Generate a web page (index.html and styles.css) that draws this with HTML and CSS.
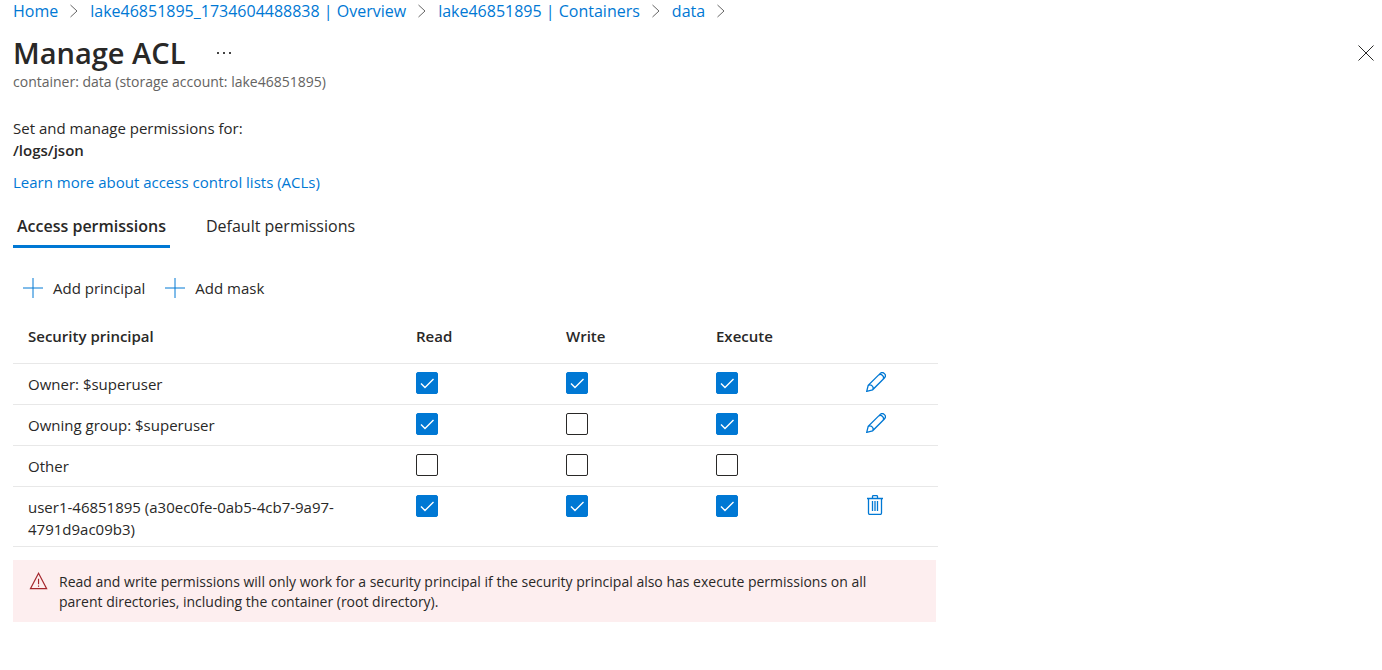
FILE: index.html
```html
<!DOCTYPE html>
<html lang="en">
<head>
<meta charset="utf-8">
<meta name="viewport" content="width=device-width, initial-scale=1">
<title>Manage ACL</title>
<link rel="stylesheet" href="styles.css">
</head>
<body>
<svg class="sprite" aria-hidden="true">
  <symbol id="chevron" viewBox="0 0 8 14"><path d="M.5 1 7 7 .5 13"/></symbol>
  <symbol id="plus" viewBox="0 0 20 20"><path d="M10 0v20M0 10h20"/></symbol>
  <symbol id="pencil" viewBox="0 0 20 20"><path d="M.7 19.3 2.2 13.4 14 1.6a3 3 0 0 1 4.4 4.4L6.6 17.8ZM2.2 13.4a3.2 3.2 0 0 1 4.4 4.4M12.6 3a3.2 3.2 0 0 1 4.4 4.4M.7 19.3 6.6 17.8"/></symbol>
  <symbol id="trash" viewBox="0 0 20 20"><path d="M1 3.500h16M6.500 3.500V1.600Q6.500 .600 7.500 .600h3Q11.500 .600 11.500 1.600V3.500M2.500 3.500V18Q2.500 19.500 4 19.500H14Q15.500 19.500 15.500 18V3.500M6.500 6v10M9 6v10M11.500 6v10"/></symbol>
  <symbol id="warning" viewBox="0 0 20 20"><path d="M9.500 1.500 18.500 18.500H.5ZM9.500 7.500v6M9.500 15v1.500"/></symbol>
  <symbol id="close" viewBox="0 0 16 16"><path d="m.5.5 15 15m0-15-15 15"/></symbol>
</svg>
<div class="page">
  <nav class="breadcrumb" aria-label="Breadcrumb">
    <a href="#">Home</a>
    <svg class="chevron"><use href="#chevron"/></svg>
    <a href="#">lake46851895_1734604488838 | Overview</a>
    <svg class="chevron"><use href="#chevron"/></svg>
    <a href="#">lake46851895 | Containers</a>
    <svg class="chevron"><use href="#chevron"/></svg>
    <a href="#">data</a>
    <svg class="chevron"><use href="#chevron"/></svg>
  </nav>

  <header class="header">
    <div class="title-row">
      <h1 class="title">Manage ACL</h1>
      <button class="more" type="button" aria-label="More actions"><svg viewBox="0 0 14 2"><path d="M0 0h2v2H0zM6 0h2v2H6zM12 0h2v2h-2z"/></svg></button>
      <button class="close" type="button" aria-label="Close"><svg><use href="#close"/></svg></button>
    </div>
    <p class="subtitle">container: data (storage account: lake46851895)</p>
  </header>

  <main class="content">
    <p class="intro">Set and manage permissions for:<br><strong>/logs/json</strong></p>
    <a class="learn" href="#">Learn more about access control lists (ACLs)</a>

    <div class="tabs" role="tablist">
      <button class="tab tab-active" type="button" role="tab" aria-selected="true">Access permissions</button>
      <button class="tab" type="button" role="tab" aria-selected="false">Default permissions</button>
    </div>

    <div class="toolbar">
      <button class="command" type="button"><svg><use href="#plus"/></svg>Add principal</button>
      <button class="command" type="button"><svg><use href="#plus"/></svg>Add mask</button>
    </div>

    <table class="acl">
      <colgroup><col class="col-name"><col class="col-perm"><col class="col-perm"><col class="col-perm"><col></colgroup>
      <thead>
        <tr><th scope="col">Security principal</th><th scope="col">Read</th><th scope="col">Write</th><th scope="col">Execute</th><td></td></tr>
      </thead>
      <tbody>
        <tr>
          <td>Owner: $superuser</td>
          <td class="tick"><input type="checkbox" aria-label="Owner read" checked></td>
          <td class="tick"><input type="checkbox" aria-label="Owner write" checked></td>
          <td class="tick"><input type="checkbox" aria-label="Owner execute" checked></td>
          <td class="action"><button type="button" aria-label="Edit owner"><svg><use href="#pencil"/></svg></button></td>
        </tr>
        <tr>
          <td>Owning group: $superuser</td>
          <td class="tick"><input type="checkbox" aria-label="Owning group read" checked></td>
          <td class="tick"><input type="checkbox" aria-label="Owning group write"></td>
          <td class="tick"><input type="checkbox" aria-label="Owning group execute" checked></td>
          <td class="action"><button type="button" aria-label="Edit owning group"><svg><use href="#pencil"/></svg></button></td>
        </tr>
        <tr>
          <td>Other</td>
          <td class="tick"><input type="checkbox" aria-label="Other read"></td>
          <td class="tick"><input type="checkbox" aria-label="Other write"></td>
          <td class="tick"><input type="checkbox" aria-label="Other execute"></td>
          <td></td>
        </tr>
        <tr>
          <td>user1-46851895 (a30ec0fe-0ab5-4cb7-9a97-4791d9ac09b3)</td>
          <td class="tick"><input type="checkbox" aria-label="user1 read" checked></td>
          <td class="tick"><input type="checkbox" aria-label="user1 write" checked></td>
          <td class="tick"><input type="checkbox" aria-label="user1 execute" checked></td>
          <td class="action"><button type="button" aria-label="Delete user1"><svg><use href="#trash"/></svg></button></td>
        </tr>
      </tbody>
    </table>

    <div class="notice" role="alert">
      <svg><use href="#warning"/></svg>
      <p>Read and write permissions will only work for a security principal if the security principal also has execute permissions on all parent directories, including the container (root directory).</p>
    </div>
  </main>
</div>
</body>
</html>
```
FILE: styles.css
```css
* { box-sizing: border-box; }

body {
  margin: 0;
  background: #fff;
  color: #292827;
  font: 15px/22px "Open Sans", "Noto Sans", sans-serif;
}

h1, p { margin: 0; }
a { color: #0078d4; text-decoration: none; }
strong { font-weight: 600; }

button {
  padding: 0;
  border: 0;
  background: none;
  color: inherit;
  font: inherit;
  cursor: pointer;
}

svg { display: block; flex: none; fill: none; stroke: currentColor; }
.sprite { display: none; }

.page { padding: 0 8px 0 13px; }

.breadcrumb {
  display: flex;
  align-items: center;
  gap: 12px;
  font-size: 16px;
}
.chevron { width: 8px; height: 14px; color: #666; }

.header { padding-top: 11px; }
.title-row { display: flex; align-items: center; height: 39px; }
.title { font-size: 29px; line-height: 39px; font-weight: 600; }
.more { margin-left: 32px; padding: 8px 0; }
.more svg { width: 14px; height: 2px; fill: #444; stroke: none; }
.close { margin-left: auto; color: #292827; }
.close svg { width: 16px; height: 16px; }
.subtitle { color: #646362; font-size: 14px; line-height: 20px; }

.content { max-width: 925px; padding-top: 25px; }
.learn { display: inline-block; margin-top: 10px; }

.tabs { display: flex; gap: 32px; margin-top: 17px; }
.tab {
  padding: 4px 4px 7px;
  border-bottom: 3px solid transparent;
  font-size: 16px;
  line-height: 24px;
}
.tab-active { border-color: #0078d4; font-weight: 600; }

.toolbar { display: flex; gap: 20px; padding: 29px 10px 0; }
.command { display: flex; align-items: center; gap: 10px; }
.command svg { width: 20px; height: 20px; color: #0078d4; }

.acl {
  width: 100%;
  margin-top: 16px;
  border-collapse: collapse;
  table-layout: fixed;
}
.col-name { width: 403px; }
.col-perm { width: 150px; }
.acl th, .acl td {
  padding: 9px 0 6px;
  border-bottom: 1px solid #e8e8e8;
  text-align: left;
  vertical-align: top;
}
.acl th { padding: 10px 0 16px; font-weight: 600; }
.acl th:first-child, .acl td:first-child { padding-left: 15px; padding-right: 60px; }
.acl .tick { padding: 8px 0 10px; }
.acl .action { padding: 8px 0 8px; color: #0078d4; }
.action button { display: block; }
.action svg { width: 20px; height: 20px; stroke-width: 1.3; }

input[type="checkbox"] {
  display: block;
  width: 22px;
  height: 22px;
  margin: 0;
  appearance: none;
  border: 1px solid #292827;
  border-radius: 2px;
  background: #fff;
}
input[type="checkbox"]:checked {
  border-color: #0078d4;
  background: #0078d4 url("data:image/svg+xml,%3Csvg xmlns='http://www.w3.org/2000/svg' viewBox='0 0 20 20'%3E%3Cpath d='M4 10.500 8 14.500 16.500 6' fill='none' stroke='white' stroke-width='1.400'/%3E%3C/svg%3E") center / 20px 20px no-repeat;
}

.notice {
  display: flex;
  gap: 10px;
  margin: 13px 2px 0 0;
  padding: 12px 50px 10px 16px;
  background: #fdeeef;
  font-size: 14px;
  line-height: 20px;
}
.notice svg { width: 20px; height: 18px; color: #a4262c; stroke-width: 1.3; }
```
